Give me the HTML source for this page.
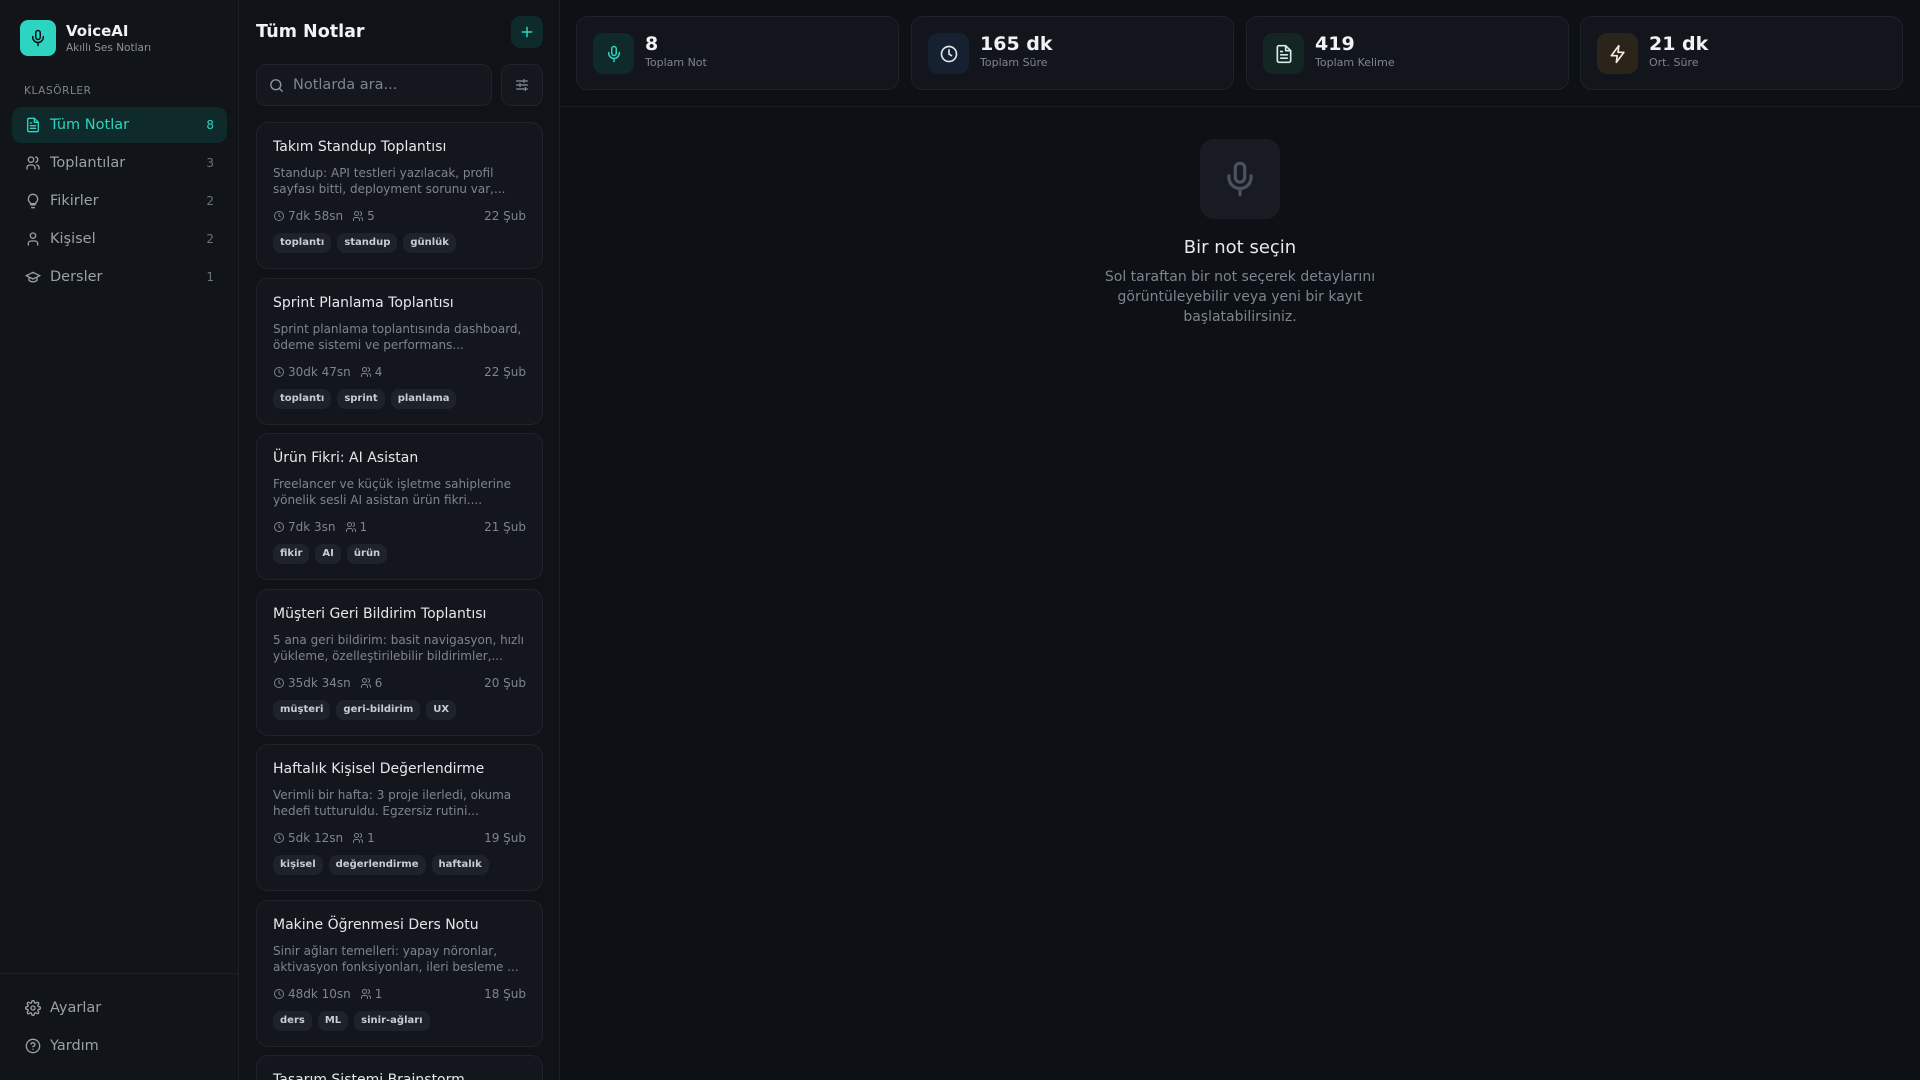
<!DOCTYPE html>
<html><head><meta charset="utf-8"><style>
*{box-sizing:border-box;margin:0;padding:0}
html,body{width:1920px;height:1080px;overflow:hidden}
body{background:#0d1014;font-family:"DejaVu Sans","Liberation Sans",sans-serif;color:#e6e8eb;position:relative}
.abs{position:absolute}
#side{left:0;top:0;width:239px;height:1080px;background:#111419;border-right:1px solid #1d2127}
#list{left:239px;top:0;width:321px;height:1080px;background:#0f1216;border-right:1px solid #1d2127;overflow:hidden}
.nav{position:absolute;left:12px;width:215px;height:36px;border-radius:10px;display:flex;align-items:center;font-size:14.5px;color:#9aa1ab}
.nav svg{position:absolute;left:13px}
.nav .t{position:absolute;left:38px}
.nav .c{position:absolute;right:13px;font-size:12px;color:#6b7280}
.nav.on{background:#0f2a2a;color:#2dd4bf}
.nav.on .c{color:#2dd4bf}
.card{position:absolute;left:17px;width:287px;height:147px;background:#13161c;border:1px solid #1f232a;border-radius:12px}
.card .ti{position:absolute;left:16px;top:16px;font-size:14px;color:#e5e7eb;white-space:nowrap}
.card .d{position:absolute;left:16px;top:42px;width:258px;font-size:12px;line-height:16px;height:32px;overflow:hidden;color:#7d8590}
.card .m{position:absolute;left:16px;top:86px;right:16px;font-size:12px;color:#7d8590;height:16px}
.card .m span{display:inline-flex;align-items:center;gap:3px;margin-right:9px}
.card .m .dt{position:absolute;right:0;top:0;margin:0}
.card .tg{position:absolute;left:16px;top:110px;display:flex;gap:6px}
.card .tg b{background:#1e2229;border-radius:8px;height:20px;padding:0 7px;font-size:10px;line-height:20px;color:#c9cdd3}
.stat{position:absolute;top:16px;width:323px;height:74px;background:#12151b;border:1px solid #1e222a;border-radius:12px}
.stat .ic{position:absolute;left:16px;top:16px;width:41px;height:41px;border-radius:10px;display:flex;align-items:center;justify-content:center}
.stat .n{position:absolute;left:68px;top:16px;font-size:19px;font-weight:bold;color:#f0f2f4}
.stat .l{position:absolute;left:68px;top:39px;font-size:11px;color:#7d8590}
</style></head><body>
<div id="side" class="abs">
 <div class="abs" style="left:20px;top:20px;width:36px;height:36px;border-radius:8px;background:#2dd4bf;display:flex;align-items:center;justify-content:center">
  <svg width="18" height="18" viewBox="0 0 24 24" fill="none" stroke="#0d1014" stroke-width="2" stroke-linecap="round"><rect x="9" y="2" width="6" height="12" rx="3"/><path d="M19 10v1a7 7 0 0 1-14 0v-1M12 18v4"/></svg>
 </div>
 <div class="abs" style="left:66px;top:22px;font-size:15px;font-weight:bold;color:#f0f2f4">VoiceAI</div>
 <div class="abs" style="left:66px;top:42px;font-size:10.5px;color:#8b929c">Akıllı Ses Notları</div>
 <div class="abs" style="left:24px;top:85px;font-size:10.5px;letter-spacing:.6px;color:#7d8590">KLASÖRLER</div>
 <div class="nav on" style="top:107px"><svg width="16" height="16" viewBox="0 0 24 24" fill="none" stroke="currentColor" stroke-width="2" stroke-linecap="round" stroke-linejoin="round"><path d="M14 2H6a2 2 0 0 0-2 2v16a2 2 0 0 0 2 2h12a2 2 0 0 0 2-2V8z"/><path d="M14 2v6h6M8 13h8M8 17h8M8 9h2"/></svg><span class="t">Tüm Notlar</span><span class="c">8</span></div>
 <div class="nav" style="top:145px"><svg width="16" height="16" viewBox="0 0 24 24" fill="none" stroke="currentColor" stroke-width="2" stroke-linecap="round"><circle cx="9" cy="7" r="4"/><path d="M3 21v-2a4 4 0 0 1 4-4h4a4 4 0 0 1 4 4v2M16 3.1a4 4 0 0 1 0 7.8M21 21v-2a4 4 0 0 0-3-3.9"/></svg><span class="t">Toplantılar</span><span class="c">3</span></div>
 <div class="nav" style="top:183px"><svg width="16" height="16" viewBox="0 0 24 24" fill="none" stroke="currentColor" stroke-width="2" stroke-linecap="round"><path d="M9 18h6M10 22h4M12 2a7 7 0 0 0-4 12.7V16h8v-1.3A7 7 0 0 0 12 2z"/></svg><span class="t">Fikirler</span><span class="c">2</span></div>
 <div class="nav" style="top:221px"><svg width="16" height="16" viewBox="0 0 24 24" fill="none" stroke="currentColor" stroke-width="2" stroke-linecap="round"><circle cx="12" cy="7" r="4"/><path d="M5 21v-2a4 4 0 0 1 4-4h6a4 4 0 0 1 4 4v2"/></svg><span class="t">Kişisel</span><span class="c">2</span></div>
 <div class="nav" style="top:259px"><svg width="16" height="16" viewBox="0 0 24 24" fill="none" stroke="currentColor" stroke-width="2" stroke-linecap="round"><path d="M22 10 12 5 2 10l10 5 10-5zM6 12v5c3 3 9 3 12 0v-5"/></svg><span class="t">Dersler</span><span class="c">1</span></div>
 <div class="abs" style="left:0;top:973px;width:239px;height:1px;background:#1d2127"></div>
 <div class="nav" style="top:990px"><svg width="16" height="16" viewBox="0 0 24 24" fill="none" stroke="currentColor" stroke-width="2"><circle cx="12" cy="12" r="3"/><path d="M19.4 15a1.7 1.7 0 0 0 .3 1.8l.1.1a2 2 0 1 1-2.8 2.8l-.1-.1a1.7 1.7 0 0 0-2.9 1.2V21a2 2 0 1 1-4 0v-.1a1.7 1.7 0 0 0-2.9-1.2l-.1.1a2 2 0 1 1-2.8-2.8l.1-.1A1.7 1.7 0 0 0 3 14H3a2 2 0 1 1 0-4h.1a1.7 1.7 0 0 0 1.2-2.9l-.1-.1a2 2 0 1 1 2.8-2.8l.1.1A1.7 1.7 0 0 0 10 3V3a2 2 0 1 1 4 0v.1a1.7 1.7 0 0 0 2.9 1.2l.1-.1a2 2 0 1 1 2.8 2.8l-.1.1A1.7 1.7 0 0 0 21 10h.1a2 2 0 1 1 0 4H21a1.7 1.7 0 0 0-1.6 1z"/></svg><span class="t">Ayarlar</span></div>
 <div class="nav" style="top:1028px"><svg width="16" height="16" viewBox="0 0 24 24" fill="none" stroke="currentColor" stroke-width="2" stroke-linecap="round"><circle cx="12" cy="12" r="10"/><path d="M9.1 9a3 3 0 0 1 5.8 1c0 2-3 3-3 3M12 17h.01"/></svg><span class="t">Yardım</span></div>
</div>

<svg width="0" height="0" style="position:absolute"><defs>
<symbol id="clk" viewBox="0 0 24 24"><circle cx="12" cy="12" r="9" fill="none" stroke="#7d8590" stroke-width="2"/><path d="M12 7v5l3 2" fill="none" stroke="#7d8590" stroke-width="2" stroke-linecap="round"/></symbol>
<symbol id="ppl" viewBox="0 0 24 24"><g fill="none" stroke="#7d8590" stroke-width="2" stroke-linecap="round"><circle cx="9" cy="7" r="4"/><path d="M3 21v-2a4 4 0 0 1 4-4h4a4 4 0 0 1 4 4v2M16 3.1a4 4 0 0 1 0 7.8M21 21v-2a4 4 0 0 0-3-3.9"/></g></symbol>
</defs></svg>

<div id="list" class="abs">
 <div class="abs" style="left:17px;top:22px;font-size:17.5px;font-weight:bold;color:#f0f2f4">Tüm Notlar</div>
 <div class="abs" style="left:272px;top:16px;width:32px;height:32px;border-radius:9px;background:#0f2a2a;display:flex;align-items:center;justify-content:center"><svg width="16" height="16" viewBox="0 0 24 24" fill="none" stroke="#2dd4bf" stroke-width="2.2" stroke-linecap="round"><path d="M12 5v14M5 12h14"/></svg></div>
 <div class="abs" style="left:17px;top:64px;width:236px;height:42px;border-radius:10px;background:#14171d;border:1px solid #1f232a">
  <svg class="abs" style="left:11px;top:12px" width="17" height="17" viewBox="0 0 24 24" fill="none" stroke="#8b929c" stroke-width="2" stroke-linecap="round"><circle cx="11" cy="11" r="7"/><path d="m20 20-4-4"/></svg>
  <span class="abs" style="left:36px;top:12px;font-size:14.5px;color:#7d8590">Notlarda ara...</span>
 </div>
 <div class="abs" style="left:262px;top:64px;width:42px;height:42px;border-radius:10px;background:#14171d;border:1px solid #1f232a;display:flex;align-items:center;justify-content:center"><svg width="16" height="16" viewBox="0 0 24 24" fill="none" stroke="#8b929c" stroke-width="2" stroke-linecap="round"><path d="M4 6h9M17 6h3M4 12h3M11 12h9M4 18h11M19 18h1M15 4v4M9 10v4M17 16v4"/></svg></div>

<div class="card" style="top:122px"><div class="ti">Takım Standup Toplantısı</div><div class="d">Standup: API testleri yazılacak, profil sayfası bitti, deployment sorunu var,...</div><div class="m"><span><svg width="12" height="12"><use href="#clk"/></svg>7dk 58sn</span><span><svg width="12" height="12"><use href="#ppl"/></svg>5</span><span class="dt">22 Şub</span></div><div class="tg"><b>toplantı</b><b>standup</b><b>günlük</b></div></div>
<div class="card" style="top:278px"><div class="ti">Sprint Planlama Toplantısı</div><div class="d">Sprint planlama toplantısında dashboard, ödeme sistemi ve performans...</div><div class="m"><span><svg width="12" height="12"><use href="#clk"/></svg>30dk 47sn</span><span><svg width="12" height="12"><use href="#ppl"/></svg>4</span><span class="dt">22 Şub</span></div><div class="tg"><b>toplantı</b><b>sprint</b><b>planlama</b></div></div>
<div class="card" style="top:433px"><div class="ti">Ürün Fikri: AI Asistan</div><div class="d">Freelancer ve küçük işletme sahiplerine yönelik sesli AI asistan ürün fikri....</div><div class="m"><span><svg width="12" height="12"><use href="#clk"/></svg>7dk 3sn</span><span><svg width="12" height="12"><use href="#ppl"/></svg>1</span><span class="dt">21 Şub</span></div><div class="tg"><b>fikir</b><b>AI</b><b>ürün</b></div></div>
<div class="card" style="top:589px"><div class="ti">Müşteri Geri Bildirim Toplantısı</div><div class="d">5 ana geri bildirim: basit navigasyon, hızlı yükleme, özelleştirilebilir bildirimler,...</div><div class="m"><span><svg width="12" height="12"><use href="#clk"/></svg>35dk 34sn</span><span><svg width="12" height="12"><use href="#ppl"/></svg>6</span><span class="dt">20 Şub</span></div><div class="tg"><b>müşteri</b><b>geri-bildirim</b><b>UX</b></div></div>
<div class="card" style="top:744px"><div class="ti">Haftalık Kişisel Değerlendirme</div><div class="d">Verimli bir hafta: 3 proje ilerledi, okuma hedefi tutturuldu. Egzersiz rutini...</div><div class="m"><span><svg width="12" height="12"><use href="#clk"/></svg>5dk 12sn</span><span><svg width="12" height="12"><use href="#ppl"/></svg>1</span><span class="dt">19 Şub</span></div><div class="tg"><b>kişisel</b><b>değerlendirme</b><b>haftalık</b></div></div>
<div class="card" style="top:900px"><div class="ti">Makine Öğrenmesi Ders Notu</div><div class="d">Sinir ağları temelleri: yapay nöronlar, aktivasyon fonksiyonları, ileri besleme ...</div><div class="m"><span><svg width="12" height="12"><use href="#clk"/></svg>48dk 10sn</span><span><svg width="12" height="12"><use href="#ppl"/></svg>1</span><span class="dt">18 Şub</span></div><div class="tg"><b>ders</b><b>ML</b><b>sinir-ağları</b></div></div>
<div class="card" style="top:1055px"><div class="ti">Tasarım Sistemi Brainstorm</div></div>
</div>

<div class="stat" style="left:576px"><div class="ic" style="background:#0f2a28"><svg width="18" height="18" viewBox="0 0 24 24" fill="none" stroke="#2dd4bf" stroke-width="2" stroke-linecap="round"><rect x="9" y="2" width="6" height="12" rx="3"/><path d="M19 10v1a7 7 0 0 1-14 0v-1M12 18v4"/></svg></div><div class="n">8</div><div class="l">Toplam Not</div></div>
<div class="stat" style="left:911px"><div class="ic" style="background:#152030"><svg width="20" height="20" viewBox="0 0 24 24" fill="none" stroke="#dbe4ee" stroke-width="2" stroke-linecap="round"><circle cx="12" cy="12" r="9"/><path d="M12 7v5l3 2"/></svg></div><div class="n">165 dk</div><div class="l">Toplam Süre</div></div>
<div class="stat" style="left:1246px"><div class="ic" style="background:#132623"><svg width="20" height="20" viewBox="0 0 24 24" fill="none" stroke="#d6ece6" stroke-width="2" stroke-linecap="round" stroke-linejoin="round"><path d="M14 2H6a2 2 0 0 0-2 2v16a2 2 0 0 0 2 2h12a2 2 0 0 0 2-2V8z"/><path d="M14 2v6h6M8 13h8M8 17h8M8 9h2"/></svg></div><div class="n">419</div><div class="l">Toplam Kelime</div></div>
<div class="stat" style="left:1580px"><div class="ic" style="background:#2a241a"><svg width="20" height="20" viewBox="0 0 24 24" fill="none" stroke="#f1ece0" stroke-width="2" stroke-linejoin="round"><path d="M13 2 4 14h7l-1 8 9-12h-7z"/></svg></div><div class="n">21 dk</div><div class="l">Ort. Süre</div></div>
<div class="abs" style="left:560px;top:106px;width:1360px;height:1px;background:#1a1e24"></div>

<div class="abs" style="left:1200px;top:139px;width:80px;height:80px;border-radius:14px;background:#181b21;display:flex;align-items:center;justify-content:center"><svg width="38" height="38" viewBox="0 0 24 24" fill="none" stroke="#4b5260" stroke-width="2" stroke-linecap="round"><rect x="9" y="2" width="6" height="12" rx="3"/><path d="M19 10v1a7 7 0 0 1-14 0v-1M12 18v4"/></svg></div>
<div class="abs" style="left:1040px;top:237px;width:400px;text-align:center;font-size:18px;color:#e6e8eb">Bir not seçin</div>
<div class="abs" style="left:1090px;top:267px;width:300px;text-align:center;font-size:14px;line-height:20px;color:#7d8590">Sol taraftan bir not seçerek detaylarını görüntüleyebilir veya yeni bir kayıt başlatabilirsiniz.</div>
</body></html>
